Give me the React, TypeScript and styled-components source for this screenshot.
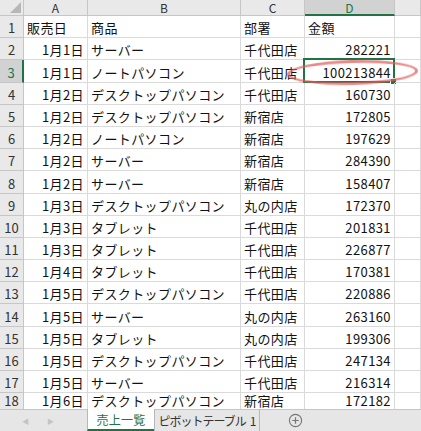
import React from "react";
import styled, { createGlobalStyle } from "styled-components";

const GlobalStyle = createGlobalStyle`
  html, body {
    margin: 0;
    padding: 0;
    background: #ffffff;
  }
  body {
    font-family: "Noto Sans CJK JP", "Noto Sans", sans-serif;
  }
`;

const Page = styled.div`
  width: 421px;
  height: 431px;
  display: flex;
  flex-direction: column;
  overflow: hidden;
  background: white;
`;

const Sheet = styled.div`
  position: relative;
  flex: 1;
  overflow: hidden;
  display: grid;
  grid-template-columns: 24px 64px 153px 64px 90px 1fr;
  grid-template-rows: 16px repeat(17, 22.2px) 1fr;
`;

const Corner = styled.div`
  position: relative;
  background: #e9e9e9;
  border-right: 1px solid #c6c6c6;
  border-bottom: 1px solid #c6c6c6;

  &::after {
    content: "";
    position: absolute;
    right: 2px;
    bottom: 2px;
    border-left: 11px solid transparent;
    border-bottom: 11px solid #b7b7b7;
  }
`;

const ColHead = styled.div<{ $active?: boolean }>`
  background: ${(p) => (p.$active ? "#d2d2d2" : "#e9e9e9")};
  color: ${(p) => (p.$active ? "#217346" : "#333")};
  border-right: 1px solid #c6c6c6;
  border-bottom: ${(p) => (p.$active ? "2px solid #217346" : "1px solid #c6c6c6")};
  font-size: 12px;
  line-height: 15px;
  height: 16px;
  text-align: center;
  box-sizing: border-box;
  overflow: hidden;
`;

const RowHead = styled.div<{ $active?: boolean }>`
  background: ${(p) => (p.$active ? "#d2d2d2" : "#e9e9e9")};
  color: ${(p) => (p.$active ? "#217346" : "#333")};
  border-right: ${(p) => (p.$active ? "2px solid #217346" : "1px solid #c6c6c6")};
  border-bottom: 1px solid #c6c6c6;
  font-size: 13px;
  line-height: 15px;
  display: flex;
  align-items: flex-end;
  justify-content: center;
  padding-bottom: 2px;
  box-sizing: border-box;
`;

const Cell = styled.div<{ $align?: "left" | "right" }>`
  position: relative;
  border-right: 1px solid #dadada;
  border-bottom: 1px solid #dadada;
  font-size: 13px;
  line-height: 15px;
  color: #111;
  display: flex;
  align-items: flex-end;
  justify-content: ${(p) => (p.$align === "right" ? "flex-end" : "flex-start")};
  padding: 0 3px 2px 3px;
  box-sizing: border-box;
  white-space: nowrap;
  letter-spacing: 0.4px;
`;

const Selection = styled.div`
  position: absolute;
  left: -2px;
  top: -2px;
  right: -1px;
  bottom: -1px;
  border: 2px solid #217346;
  pointer-events: none;

  &::after {
    content: "";
    position: absolute;
    right: -4px;
    bottom: -4px;
    width: 5px;
    height: 5px;
    background: #217346;
    border: 1px solid #fff;
  }
`;

const Ellipse = styled.div`
  position: absolute;
  left: 287px;
  top: 60px;
  width: 131px;
  height: 25px;
  box-sizing: border-box;
  border: 3.5px solid rgba(226, 92, 92, 0.72);
  border-radius: 50%;
  transform: rotate(-1.5deg);
  filter: blur(0.7px);
  pointer-events: none;
`;

const TabBar = styled.div`
  height: 21px;
  flex: none;
  background: #e6e6e6;
  border-top: 1px solid #c6c6c6;
  display: flex;
  align-items: stretch;
  font-size: 12px;
`;

const Arrows = styled.div`
  width: 88px;
  display: flex;
  align-items: center;
  gap: 18px;
  padding-left: 22px;
  box-sizing: border-box;
  color: #c4c4c4;
  font-size: 7px;
`;

const Tab = styled.div<{ $active?: boolean; $width: number }>`
  width: ${(p) => p.$width}px;
  display: flex;
  align-items: center;
  justify-content: center;
  gap: 4px;
  background: ${(p) => (p.$active ? "#fff" : "transparent")};
  color: ${(p) => (p.$active ? "#217346" : "#333")};
  border-left: 1px solid #b8b8b8;
  border-right: 1px solid #b8b8b8;
  border-bottom: ${(p) => (p.$active ? "2px solid #217346" : "none")};
  margin-left: -1px;
  margin-top: -1px;
  box-sizing: border-box;
  white-space: nowrap;
  letter-spacing: ${(p) => (p.$active ? "0.3px" : "-1px")};
`;

const AddButton = styled.div`
  margin-left: 28px;
  display: flex;
  align-items: center;
`;

type Row = [string, string, string, string];

const rows: Row[] = [
  ["1月1日", "サーバー", "千代田店", "282221"],
  ["1月1日", "ノートパソコン", "千代田店", "100213844"],
  ["1月2日", "デスクトップパソコン", "千代田店", "160730"],
  ["1月2日", "デスクトップパソコン", "新宿店", "172805"],
  ["1月2日", "ノートパソコン", "新宿店", "197629"],
  ["1月2日", "サーバー", "新宿店", "284390"],
  ["1月2日", "サーバー", "新宿店", "158407"],
  ["1月3日", "デスクトップパソコン", "丸の内店", "172370"],
  ["1月3日", "タブレット", "千代田店", "201831"],
  ["1月3日", "タブレット", "千代田店", "226877"],
  ["1月4日", "タブレット", "千代田店", "170381"],
  ["1月5日", "デスクトップパソコン", "千代田店", "220886"],
  ["1月5日", "サーバー", "丸の内店", "263160"],
  ["1月5日", "タブレット", "丸の内店", "199306"],
  ["1月5日", "デスクトップパソコン", "千代田店", "247134"],
  ["1月5日", "サーバー", "千代田店", "216314"],
  ["1月6日", "デスクトップパソコン", "新宿店", "172182"],
];

const columns = ["A", "B", "C", "D", ""];

export default function App() {
  return (
    <Page>
      <GlobalStyle />
      <Sheet>
        <Corner />
        {columns.map((c) => (
          <ColHead key={c || "E"} $active={c === "D"}>{c}</ColHead>
        ))}

        <RowHead>1</RowHead>
        <Cell>販売日</Cell>
        <Cell>商品</Cell>
        <Cell>部署</Cell>
        <Cell>金額</Cell>
        <Cell />

        {rows.map((r, i) => {
          const n = i + 2;
          return (
            <React.Fragment key={n}>
              <RowHead $active={n === 3}>{n}</RowHead>
              <Cell $align="right">{r[0]}</Cell>
              <Cell>{r[1]}</Cell>
              <Cell>{r[2]}</Cell>
              <Cell $align="right">
                {r[3]}
                {n === 3 && <Selection />}
              </Cell>
              <Cell />
            </React.Fragment>
          );
        })}
        <Ellipse />
      </Sheet>
      <TabBar>
        <Arrows>
          <span>◀</span>
          <span>▶</span>
        </Arrows>
        <Tab $active $width={68}>売上一覧</Tab>
        <Tab $width={106}>
          <span>ピボットテーブル</span>
          <span>1</span>
        </Tab>
        <AddButton>
          <svg width="15" height="15" viewBox="0 0 16 16">
            <circle cx="8" cy="8" r="6.5" fill="none" stroke="#777" strokeWidth="1.2" />
            <path d="M8 4.5v7M4.5 8h7" stroke="#777" strokeWidth="1.3" />
          </svg>
        </AddButton>
      </TabBar>
    </Page>
  );
}
